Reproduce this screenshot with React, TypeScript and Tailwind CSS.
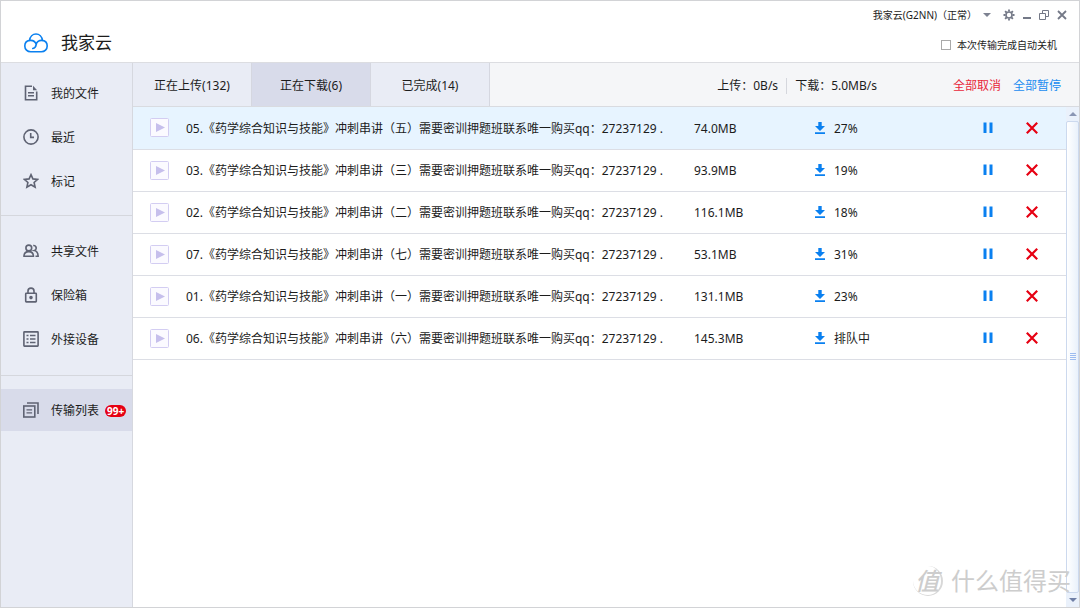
import { clsx } from "clsx";
import type { ReactNode } from "react";

type Download = {
  id: string;
  part: string;
  size: string;
  status: string;
};

const downloads: Download[] = [
  { id: "05", part: "五", size: "74.0MB", status: "27%" },
  { id: "03", part: "三", size: "93.9MB", status: "19%" },
  { id: "02", part: "二", size: "116.1MB", status: "18%" },
  { id: "07", part: "七", size: "53.1MB", status: "31%" },
  { id: "01", part: "一", size: "131.1MB", status: "23%" },
  { id: "06", part: "六", size: "145.3MB", status: "排队中" },
];

const tabs = [
  { label: "正在上传(132)", active: false },
  { label: "正在下载(6)", active: true },
  { label: "已完成(14)", active: false },
];

function Icon({ children }: { children: ReactNode }) {
  return (
    <svg
      viewBox="0 0 16 16"
      className="size-4 shrink-0"
      fill="none"
      stroke="#5f6373"
      strokeWidth="1.6"
    >
      {children}
    </svg>
  );
}

const fileIcon = (
  <Icon>
    <path d="M9 1.200H2.500v13.600h11.200V6.500" />
    <path d="M10 .8v4.400h4.200z" fill="#5f6373" stroke="none" />
    <path d="M5 7.700h6M5 10.700h6" strokeWidth="1.400" />
  </Icon>
);

const clockIcon = (
  <Icon>
    <circle cx="8" cy="8" r="7.100" />
    <path d="M7.700 4v4.400H11" />
  </Icon>
);

const starIcon = (
  <Icon>
    <path d="M8 1.700l1.900 4.200 4.700.5-3.500 3.100 1 4.700L8 11.800l-4.100 2.400 1-4.700-3.500-3.100 4.700-.5z" />
  </Icon>
);

const usersIcon = (
  <Icon>
    <circle cx="5.800" cy="5" r="2.900" />
    <path d="M1 13.200c0-3 1.600-4.600 4.800-4.600s4.600 1.600 4.600 4.600z" />
    <path d="M10.200 2.500c3.400-.3 4 4 1.200 5 2.400.4 3.600 2.600 3.700 5.700h-2.600" />
  </Icon>
);

const lockIcon = (
  <Icon>
    <rect x="2.700" y="6.300" width="10.600" height="8.600" rx="0.600" />
    <path d="M5 6V4c0-3.800 6-3.800 6 0v2" />
    <circle cx="8" cy="10.600" r="1" fill="#5f6373" />
  </Icon>
);

const deviceIcon = (
  <Icon>
    <rect x="0.900" y="0.900" width="14.200" height="14.200" rx="0.500" />
    <path d="M3.500 4.500h2M3.500 8h2M3.500 11.500h2M7 4.500h5.500M7 8h5.500M7 11.500h5.500" strokeWidth="1.300" />
  </Icon>
);

const transferIcon = (
  <Icon>
    <rect x="0.800" y="4" width="11" height="11" />
    <path d="M4 1h11v11" />
    <path d="M3.500 7.800h5.600M3.500 10.800h5.600" strokeWidth="1.300" />
  </Icon>
);

const files = [
  { label: "我的文件", icon: fileIcon },
  { label: "最近", icon: clockIcon },
  { label: "标记", icon: starIcon },
];

const tools = [
  { label: "共享文件", icon: usersIcon },
  { label: "保险箱", icon: lockIcon },
  { label: "外接设备", icon: deviceIcon },
];

function NavItem({ icon, label }: { icon: ReactNode; label: string }) {
  return (
    <a href="#" className="flex h-11 items-center gap-3 pl-[22px]">
      {icon}
      <span className="pt-0.5">{label}</span>
    </a>
  );
}

function CloudLogo() {
  return (
    <svg
      viewBox="0 0 24 20"
      className="h-5 w-6"
      fill="none"
      stroke="#0a80f0"
      strokeWidth="1.600"
      strokeLinecap="round"
    >
      <path d="M5.600 7.400C6 3.600 8.700 1 12 1s6 2.600 6.400 6.400c2.900.5 4.800 2.800 4.800 5.500 0 3.300-2.500 5.900-5.900 5.900H6.700C3.300 18.800.8 16.200.8 12.900c0-2.700 1.900-5 4.800-5.500z" />
      <path d="M5.600 7.400c3.300-.3 5.900 1.300 6.600 4.200M18.400 7.400c-3.600-.3-5.900 1.700-6.200 4.200-.3 2-1.400 3.400-3.400 3.900" />
    </svg>
  );
}

function Header() {
  return (
    <header className="flex h-[62px] shrink-0 justify-between border-b border-[#dcdde1] bg-white">
      <div className="flex items-center gap-[13px] pt-[22px] pl-[23px]">
        <CloudLogo />
        <h1 className="text-[17px] leading-6">我家云</h1>
      </div>
      <div className="flex flex-col items-end gap-[14px] pt-1.5 text-[10px] leading-4">
        <div className="flex items-center gap-2 pr-3">
          <button className="flex items-center gap-1.5">
            我家云(G2NN)（正常）
            <svg viewBox="0 0 8 4" className="h-1 w-2" fill="#7d8291">
              <path d="M0 0h8L4 4z" />
            </svg>
          </button>
          <button aria-label="设置" className="ml-1">
            <svg viewBox="0 0 12 12" className="size-3" fill="none" stroke="#747987">
              <circle cx="6" cy="6" r="3" strokeWidth="1.600" />
              <path
                d="M6 .5v2M6 9.500v2M.5 6h2M9.500 6h2M2.100 2.100l1.400 1.400M8.500 8.500l1.400 1.400M2.100 9.900l1.400-1.400M8.500 3.500l1.400-1.400"
                strokeWidth="1.800"
              />
            </svg>
          </button>
          <button aria-label="最小化">
            <svg viewBox="0 0 8 10" className="h-2.5 w-2" fill="#747987">
              <path d="M0 7h8v2H0z" />
            </svg>
          </button>
          <button aria-label="还原">
            <svg viewBox="0 0 10 10" className="size-2.5" fill="none" stroke="#747987">
              <path d="M.5 3.500h6v6h-6zM3.500 3.500v-3h6v6h-3" />
            </svg>
          </button>
          <button aria-label="关闭">
            <svg viewBox="0 0 10 10" className="size-2.5" fill="none" stroke="#747987">
              <path d="M1 1l8 8M9 1l-8 8" strokeWidth="1.800" />
            </svg>
          </button>
        </div>
        <label className="flex items-center gap-1.5 pr-[22px]">
          <input
            type="checkbox"
            className="size-2.5 appearance-none border border-[#a9a9a9] bg-white"
          />
          本次传输完成自动关机
        </label>
      </div>
    </header>
  );
}

function Sidebar() {
  return (
    <nav className="w-[132px] shrink-0 border-r border-[#d6d8df] bg-[#e9ecf5]">
      <div className="border-b border-[#d5d7dd] pt-2 pb-3">
        {files.map((item) => (
          <NavItem key={item.label} {...item} />
        ))}
      </div>
      <div className="border-b border-[#d5d7dd] pt-[13px] pb-[14px]">
        {tools.map((item) => (
          <NavItem key={item.label} {...item} />
        ))}
      </div>
      <a
        href="#"
        className="mt-[13px] flex h-[42px] items-center gap-3 bg-[#d8dbea] pl-[22px]"
      >
        {transferIcon}
        <span className="flex items-center gap-1.5 pt-0.5">
          传输列表
          <span className="rounded-full bg-[#e60012] px-0.5 text-[10px] leading-3 font-bold text-white">
            99+
          </span>
        </span>
      </a>
    </nav>
  );
}

function Toolbar() {
  return (
    <div className="flex h-11 shrink-0 border-b border-[#d9dbe0] bg-[#f5f6f8]">
      <div role="tablist" className="flex">
        {tabs.map((tab) => (
          <button
            key={tab.label}
            role="tab"
            aria-selected={tab.active}
            className={clsx(
              "w-[119px] border-r border-[#d5d7e0] pt-0.5",
              tab.active ? "bg-[#d8dbea]" : "bg-[#e9ecf5]"
            )}
          >
            {tab.label}
          </button>
        ))}
      </div>
      <div className="ml-auto flex items-center pt-0.5">
        <span className="border-r border-[#d5d7dd] pr-2">上传：0B/s</span>
        <span className="pl-2">下载：5.0MB/s</span>
      </div>
      <div className="ml-[76px] flex items-center gap-3 pt-0.5 pr-[18px]">
        <button className="text-[#e8263a]">全部取消</button>
        <button className="text-[#1a8cf0]">全部暂停</button>
      </div>
    </div>
  );
}

function Row({ item, selected }: { item: Download; selected: boolean }) {
  return (
    <tr className={clsx("h-[42px] border-b border-[#dcdee5]", selected && "bg-[#e7f4ff]")}>
      <td className="pl-[17px]">
        <svg viewBox="0 0 19 19" className="size-[19px]">
          <rect x="0.500" y="0.500" width="18" height="18" rx="1" fill="#fbfaff" stroke="#d3cdf2" />
          <path d="M6 5l9 4.500L6 14z" fill="#c6bfec" />
        </svg>
      </td>
      <td className="truncate pt-0.5">
        {item.id}.《药学综合知识与技能》冲刺串讲（{item.part}）需要密训押题班联系唯一购买qq：27237129 .
      </td>
      <td className="pt-0.5">{item.size}</td>
      <td>
        <span className="flex items-center gap-2">
          <svg viewBox="0 0 12 12" className="size-3" fill="#0a80f0">
            <path d="M4.300 0h3.400v4H11L6 9 1 4h3.300zM1 10.300h10V12H1z" />
          </svg>
          <span className="pt-0.5">{item.status}</span>
        </span>
      </td>
      <td>
        <button aria-label="暂停" className="mx-auto block">
          <svg viewBox="0 0 10 12" className="h-3 w-2.5" fill="#0a80f0">
            <path d="M.5 .5h3v10.500h-3zM6.500 .5h3v10.500h-3z" />
          </svg>
        </button>
      </td>
      <td className="pr-3">
        <button aria-label="取消" className="mx-auto block">
          <svg viewBox="0 0 12 12" className="size-3" stroke="#e60012" strokeWidth="2.200">
            <path d="M.8 .8l10.400 10.400M11.200 .8L.8 11.200" />
          </svg>
        </button>
      </td>
    </tr>
  );
}

function Scrollbar() {
  return (
    <div className="flex w-[13px] shrink-0 flex-col items-center bg-[#eaf1fb]">
      <svg viewBox="0 0 8 4" className="my-[5px] h-1 w-2" fill="#8a96b4">
        <path d="M4 0l4 4H0z" />
      </svg>
      <div className="flex w-full flex-1 items-center justify-center rounded-xs border border-[#ccd9ee] bg-gradient-to-r from-white to-[#e9f1fb]">
        <svg viewBox="0 0 6 8" className="h-2 w-1.5" stroke="#9dbcf0">
          <path d="M0 .5h6M0 2.500h6M0 4.500h6M0 6.500h6" />
        </svg>
      </div>
      <svg viewBox="0 0 8 4" className="my-[5px] h-1 w-2" fill="#6f7fa6">
        <path d="M0 0h8L4 4z" />
      </svg>
    </div>
  );
}

function Watermark() {
  return (
    <div className="pointer-events-none absolute right-2 bottom-2 flex items-center gap-2 text-2xl leading-9 text-[#cdcdcd]">
      <span className="flex size-[30px] items-center justify-center rounded-full border-r-2 border-b border-[#d8d8d8] font-medium italic">
        值
      </span>
      什么值得买
    </div>
  );
}

export default function App() {
  return (
    <div className="relative flex h-screen flex-col border border-[#d2d3d6] bg-white font-['Noto_Sans','Noto_Sans_CJK_SC',sans-serif] text-xs text-[#1c1c1c]">
      <Header />
      <div className="flex min-h-0 flex-1">
        <Sidebar />
        <main className="flex min-w-0 flex-1 flex-col">
          <Toolbar />
          <div className="flex min-h-0 flex-1">
            <div className="min-w-0 flex-1">
              <table className="w-full table-fixed border-collapse text-left">
                <colgroup>
                  <col className="w-[53px]" />
                  <col />
                  <col className="w-[120px]" />
                  <col className="w-[152px]" />
                  <col className="w-11" />
                  <col className="w-14" />
                </colgroup>
                <tbody>
                  {downloads.map((item, i) => (
                    <Row key={item.id} item={item} selected={i === 0} />
                  ))}
                </tbody>
              </table>
            </div>
            <Scrollbar />
          </div>
        </main>
      </div>
      <Watermark />
    </div>
  );
}
